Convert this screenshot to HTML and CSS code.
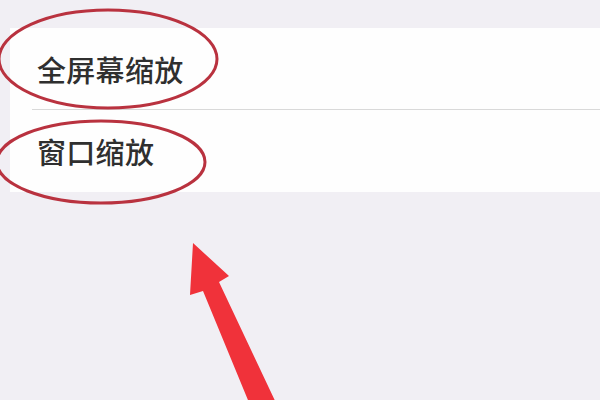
FILE: index.html
```html
<!DOCTYPE html>
<html lang="zh">
<head>
<meta charset="utf-8">
<link rel="stylesheet" href="styles.css">
</head>
<body>
<div class="page">
  <div class="list">
    <div class="row"><span class="label">全屏幕缩放</span></div>
    <div class="sep"></div>
    <div class="row row-last"><span class="label">窗口缩放</span></div>
  </div>
  <svg class="marks" width="600" height="400" viewBox="0 0 600 400">
    <ellipse cx="108" cy="59" rx="109" ry="49" fill="none" stroke="#b9323f" stroke-width="3"/>
    <ellipse cx="101" cy="162" rx="104" ry="41" fill="none" stroke="#b9323f" stroke-width="3"/>
    <polygon points="193,243 229,276 219,282 277,405 250,405 203,291 190,295" fill="#f0323a"/>
  </svg>
</div>
</body>
</html>
```
FILE: styles.css
```css
html, body {
  margin: 0;
  padding: 0;
  background: #f1eff4;
}
.page {
  position: relative;
  width: 600px;
  height: 400px;
  overflow: hidden;
  padding-top: 28px;
  box-sizing: border-box;
}
.list {
  margin-left: 10px;
  background: #fefefe;
  display: flex;
  flex-direction: column;
}
.row {
  height: 81px;
  display: flex;
  align-items: center;
  padding-left: 27px;
}
.row-last {
  height: 82px;
}
.label {
  font-family: "Noto Sans CJK SC", sans-serif;
  font-size: 29px;
  font-weight: 500;
  color: #2f2f2f;
  letter-spacing: 0.3px;
}
.sep {
  height: 1px;
  margin-left: 22px;
  background: #d9d9d9;
}
.marks {
  position: absolute;
  left: 0;
  top: 0;
}
```
